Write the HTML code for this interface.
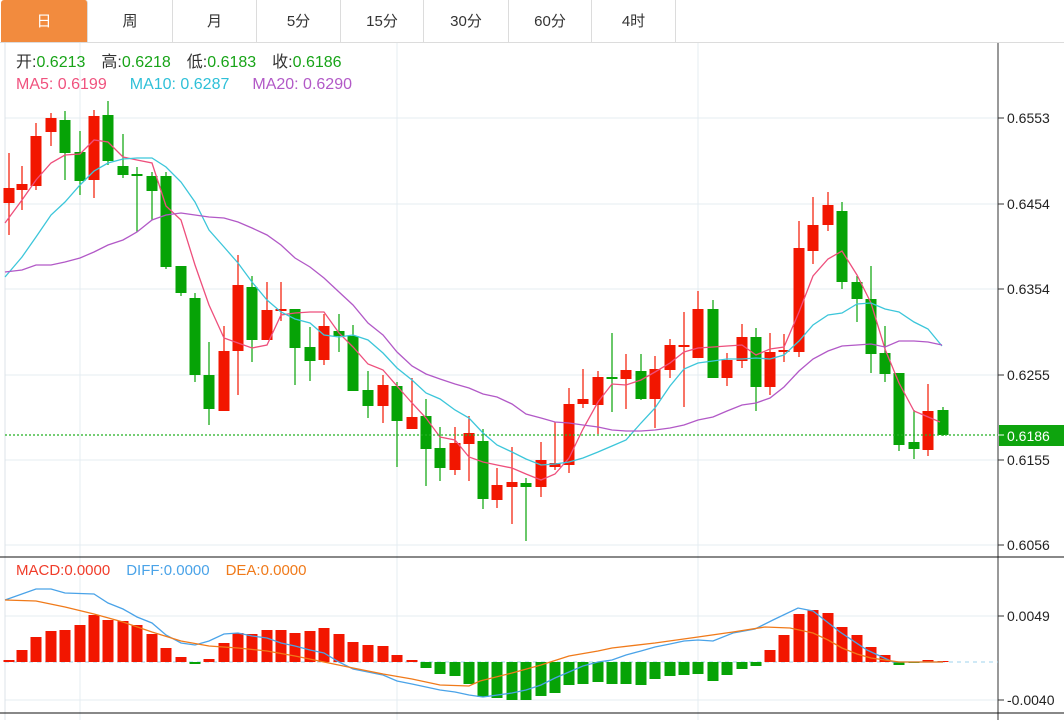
<!DOCTYPE html>
<html><head><meta charset="utf-8"><style>
body{margin:0;width:1064px;height:720px;overflow:hidden;background:#fff;font-family:"Liberation Sans","Noto Sans CJK SC",sans-serif}
.tabs{position:absolute;left:0;top:0;width:1064px;height:43px;border-bottom:1px solid #dcdcdc;box-sizing:border-box}
.tab{position:absolute;top:0;height:42px;line-height:44px;text-align:center;font-size:15px;color:#333;border-right:1px solid #dcdcdc;box-sizing:border-box}
.tab.on{background:#f28b3e;color:#fff;border-radius:3px 3px 0 0}
.lg{position:absolute;font-size:16px;line-height:18px;white-space:nowrap}
.lg span{display:inline-block}
svg{position:absolute;left:0;top:0}
</style></head><body>
<div class="tabs">
<div class="tab on" style="left:1px;width:87px">日</div>
<div class="tab" style="left:88px;width:85px">周</div>
<div class="tab" style="left:173px;width:84px">月</div>
<div class="tab" style="left:257px;width:84px">5分</div>
<div class="tab" style="left:341px;width:83px">15分</div>
<div class="tab" style="left:424px;width:85px">30分</div>
<div class="tab" style="left:509px;width:83px">60分</div>
<div class="tab" style="left:592px;width:84px">4时</div>
<div class="tab" style="left:676px;width:388px;border-right:none"></div>
</div>
<svg id="s" width="1064" height="720" xmlns="http://www.w3.org/2000/svg"></svg>
<div class="lg" style="left:16px;top:54px;color:#333"><span>开:<b style="font-weight:normal;color:#18a418">0.6213</b></span><span style="margin-left:16px">高:<b style="font-weight:normal;color:#18a418">0.6218</b></span><span style="margin-left:16px">低:<b style="font-weight:normal;color:#18a418">0.6183</b></span><span style="margin-left:16px">收:<b style="font-weight:normal;color:#18a418">0.6186</b></span></div>
<div class="lg" style="left:16px;top:76px"><span style="color:#f0527e">MA5: 0.6199</span><span style="margin-left:23px;color:#2fc0d8">MA10: 0.6287</span><span style="margin-left:23px;color:#b259c7">MA20: 0.6290</span></div>
<div class="lg" style="left:16px;top:562px;font-size:15px"><span style="color:#f03c2a">MACD:0.0000</span><span style="margin-left:16px;color:#4aa3e8">DIFF:0.0000</span><span style="margin-left:16px;color:#f07a1a">DEA:0.0000</span></div>
<script>
var s=document.getElementById('s'),h='';
function L(x1,y1,x2,y2,c,w,d){h+='<line x1="'+x1+'" y1="'+y1+'" x2="'+x2+'" y2="'+y2+'" stroke="'+c+'" stroke-width="'+(w||1)+'"'+(d?' stroke-dasharray="'+d+'"':'')+'/>';}
function P(a,c){h+='<polyline fill="none" stroke="'+c+'" stroke-width="1.3" points="'+a.map(p=>p.join(',')).join(' ')+'"/>';}
function T(x,y,t,c){h+='<text x="'+x+'" y="'+y+'" font-size="14" fill="'+(c||'#222')+'" font-family="Liberation Sans,sans-serif">'+t+'</text>';}
[118,204,289,375,460,545,616,700].forEach(y=>L(5,y,998,y,'#e4ecf2'));
[80,397,698].forEach(x=>L(x,43,x,720,'#e4ecf2'));
L(5,43,5,720,'#dde3e8');
L(998,43,998,720,'#333');
L(0,557,1064,557,'#111');L(0,713,1064,713,'#111');
[[118,'0.6553'],[204,'0.6454'],[289,'0.6354'],[375,'0.6255'],[460,'0.6155'],[545,'0.6056'],[616,'0.0049'],[700,'-0.0040']].forEach(a=>{L(998,a[0],1004,a[0],'#333');T(1007,a[0]+5,a[1]);});
var C=[[9,188,203,153,235,1],[22,184,190,166,210,1],[36,136,186,123,190,1],[51,118,132,113,146,1],[65,120,153,111,180,0],[80,152,181,131,195,0],[94,116,180,110,198,1],[108,115,161,101,165,0],[123,166,175,134,178,0],[137,174,176,167,232,0],[152,176,191,172,220,0],[166,176,267,172,269,0],[181,266,293,266,296,0],[195,298,375,293,382,0],[209,375,409,342,425,0],[224,351,411,326,411,1],[238,285,351,255,395,1],[252,287,340,276,362,0],[267,310,340,282,340,1],[281,309,311,282,321,1],[295,309,348,309,385,0],[310,347,361,327,381,0],[324,326,360,314,365,1],[339,331,336,314,352,0],[353,336,391,325,391,0],[368,390,406,371,418,0],[383,385,406,375,423,1],[397,386,421,382,467,0],[412,417,429,378,422,1],[426,416,449,399,486,0],[440,448,468,427,481,0],[455,443,470,427,475,1],[469,433,444,416,481,1],[483,441,499,429,509,0],[497,485,500,468,508,1],[512,482,487,447,524,1],[526,483,487,478,541,0],[541,460,487,442,497,1],[555,463,467,422,470,1],[569,404,465,388,473,1],[583,399,404,369,408,1],[598,377,405,371,434,1],[612,377,378,333,412,0],[626,370,379,354,409,1],[641,371,399,354,400,0],[655,369,399,356,428,1],[670,345,370,339,378,1],[684,345,346,312,407,1],[698,309,358,291,355,1],[713,309,378,300,378,0],[727,360,378,353,386,1],[742,337,361,324,368,1],[756,337,387,328,411,0],[770,352,387,333,395,1],[784,350,352,334,362,1],[799,248,352,221,357,1],[813,225,251,197,264,1],[828,205,225,192,231,1],[842,211,282,202,289,0],[857,282,299,276,322,0],[871,299,354,266,373,0],[885,353,374,326,382,0],[899,373,445,373,451,0],[914,442,449,410,459,0],[928,411,450,384,456,1],[943,410,435,407,436,0]];
C.forEach(c=>{var col=c[5]?'#f21600':'#06a306';L(c[0],c[3],c[0],c[4],col,1.2);h+='<rect x="'+(c[0]-5.5)+'" y="'+c[1]+'" width="11" height="'+Math.max(2,c[2]-c[1])+'" fill="'+col+'"/>';});
P([[5,223],[22,200],[36,180],[51,163],[65,155],[80,154],[94,140],[108,142],[123,157],[137,160],[152,163],[166,206],[181,220],[195,265],[209,305],[224,338],[238,343],[252,348],[267,345],[281,315],[295,313],[310,312],[324,312],[339,333],[353,347],[368,364],[383,370],[397,386],[412,403],[426,418],[440,437],[455,440],[469,457],[483,462],[497,465],[512,468],[526,474],[541,480],[555,474],[569,458],[583,429],[598,402],[612,384],[626,385],[641,380],[655,372],[670,363],[684,352],[698,348],[713,347],[727,346],[742,345],[756,355],[770,349],[784,347],[799,312],[813,276],[828,259],[842,251],[857,275],[871,303],[885,349],[899,383],[914,411],[940,422]],'#ee4f7c');
P([[5,277],[22,257],[36,237],[51,215],[65,202],[80,185],[94,171],[108,163],[123,159],[137,158],[152,158],[166,167],[181,182],[195,202],[209,230],[224,247],[238,263],[252,282],[267,300],[281,312],[295,319],[310,323],[324,335],[339,337],[353,335],[368,340],[383,353],[397,368],[412,380],[426,393],[440,399],[455,410],[469,418],[483,433],[497,445],[512,452],[526,459],[541,465],[555,464],[569,462],[583,458],[598,452],[612,446],[626,440],[641,423],[655,408],[670,386],[684,369],[698,363],[713,361],[727,359],[742,359],[756,358],[770,359],[784,355],[799,341],[813,325],[828,315],[842,313],[857,304],[871,303],[885,309],[899,312],[914,322],[928,329],[942,346]],'#3cc6da');
P([[5,272],[22,270],[36,265],[51,265],[65,262],[80,258],[94,252],[108,245],[123,240],[137,232],[152,220],[166,215],[181,213],[195,215],[209,217],[224,218],[238,222],[252,228],[267,235],[281,245],[295,258],[310,267],[324,278],[339,292],[353,305],[368,323],[383,335],[397,352],[412,366],[426,374],[440,379],[455,384],[469,388],[483,394],[497,397],[512,404],[526,414],[541,418],[555,422],[569,423],[583,425],[598,427],[612,430],[626,431],[641,431],[655,430],[670,428],[684,425],[698,420],[713,417],[727,411],[742,405],[756,403],[770,398],[784,387],[799,371],[813,359],[828,351],[842,346],[857,345],[871,344],[885,347],[899,341],[914,341],[928,342],[942,345]],'#b259c7');
L(5,435,998,435,'#22b022',1.2,'2,2');
h+='<rect x="999" y="425" width="65" height="21" fill="#0ea40e"/>';L(998,435,1004,435,'#fff');T(1007,441,'0.6186','#fff');
L(5,662,998,662,'#9fd3ee',1,'4,4');
var M=[[9,660],[22,650],[36,637],[51,631],[65,630],[80,625],[94,615],[108,620],[123,621],[137,625],[152,634],[166,648],[181,657],[195,664],[209,659],[224,643],[238,633],[252,634],[267,630],[281,630],[295,633],[310,631],[324,628],[339,634],[353,642],[368,645],[383,646],[397,655],[412,660],[426,668],[440,674],[455,676],[469,684],[483,697],[497,698],[512,700],[526,700],[541,696],[555,693],[569,685],[583,684],[598,682],[612,684],[626,684],[641,685],[655,679],[670,676],[684,675],[698,674],[713,681],[727,675],[742,669],[756,666],[770,650],[784,635],[799,614],[813,610],[828,613],[842,627],[857,635],[871,647],[885,655],[899,665],[914,663],[928,660],[943,661]];
M.forEach(m=>{var y=m[1];if(y<662)h+='<rect x="'+(m[0]-5.5)+'" y="'+y+'" width="11" height="'+(662-y)+'" fill="#f21600"/>';else h+='<rect x="'+(m[0]-5.5)+'" y="662" width="11" height="'+(y-662)+'" fill="#06a306"/>';});
P([[5,600],[36,589],[51,589],[65,593],[94,594],[108,603],[123,609],[137,617],[152,623],[166,635],[181,643],[195,645],[209,641],[224,634],[238,633],[252,636],[267,638],[281,643],[295,646],[310,650],[324,653],[339,662],[353,669],[368,672],[383,675],[397,681],[412,684],[426,687],[440,690],[455,692],[469,695],[483,697],[512,693],[526,690],[541,685],[555,678],[569,672],[583,666],[598,662],[612,660],[626,655],[641,651],[655,647],[670,644],[684,641],[698,640],[713,641],[733,633],[755,629],[773,620],[798,608],[813,611],[840,632],[867,650],[893,662],[943,662]],'#4aa3e8');
P([[5,600],[36,601],[65,607],[94,614],[123,622],[152,632],[181,641],[209,646],[238,648],[267,651],[295,656],[324,662],[353,668],[383,674],[412,679],[440,685],[469,686],[480,681],[512,673],[541,665],[569,656],[598,651],[612,648],[655,643],[698,637],[733,632],[765,627],[790,628],[813,633],[828,640],[842,648],[857,654],[871,658],[899,662],[943,662]],'#f07a1a');
s.innerHTML=h;
</script>
</body></html>
